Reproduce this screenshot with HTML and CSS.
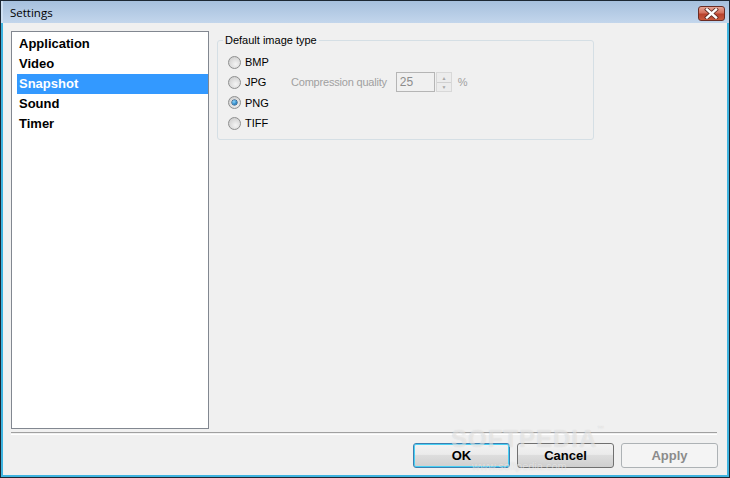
FILE: index.html
```html
<!DOCTYPE html>
<html lang="en">
<head>
    <meta charset="UTF-8">
    <title>Settings</title>
    <link rel="stylesheet" href="styles.css">
</head>
<body>

    <div class="window">
        <div class="titlebar">
            <span class="title">Settings</span>
            <span class="close-btn">
                <svg width="15" height="11" viewBox="0 0 15 11">
                    <path d="M3 1.5 L12 9.5 M12 1.5 L3 9.5" stroke="#5a2a22" stroke-width="4" stroke-linecap="square"/>
                    <path d="M3 1.5 L12 9.5 M12 1.5 L3 9.5" stroke="#ffffff" stroke-width="2.4" stroke-linecap="square"/>
                </svg>
            </span>
        </div>

        <div class="client">
            <div class="main">
                <ul class="nav-list">
                    <li>Application</li>
                    <li>Video</li>
                    <li class="selected">Snapshot</li>
                    <li>Sound</li>
                    <li>Timer</li>
                </ul>

                <fieldset class="group">
                    <legend>Default image type</legend>
                    <div class="radio-row"><span class="radio"></span>BMP</div>
                    <div class="radio-row">
                        <span class="radio"></span><span class="label-fixed">JPG</span>
                        <span class="disabled-text compress">Compression quality</span>
                        <span class="spin-input">25</span>
                        <span class="spin-buttons">
                            <span class="spin-up">&#9650;</span>
                            <span class="spin-down">&#9660;</span>
                        </span>
                        <span class="disabled-text percent">%</span>
                    </div>
                    <div class="radio-row"><span class="radio checked"></span>PNG</div>
                    <div class="radio-row"><span class="radio"></span>TIFF</div>
                </fieldset>
            </div>

            <div class="separator"></div>

            <div class="button-row">
                <button class="btn default">OK</button>
                <button class="btn">Cancel</button>
                <button class="btn" disabled>Apply</button>
            </div>

            <div class="watermark">SOFTPEDIA<sup>™</sup></div>
            <div class="watermark-url">www.softpedia.com</div>
        </div>
    </div>

</body>
</html>
```

FILE: styles.css
```css
body {
    margin: 0;
    padding: 0;
    background-color: #1f2b38;
    font-family: 'Liberation Sans', Arial, sans-serif;
}

.window {
    width: 730px;
    height: 478px;
    box-sizing: border-box;
    border: 1px solid #1c2733;
    display: flex;
    flex-direction: column;
    background: linear-gradient(#a6c0dd, #c3d6ec 22px);
}

.titlebar {
    height: 22px;
    display: flex;
    align-items: center;
    justify-content: space-between;
    padding: 0 4px 0 7px;
    border-left: 2px solid #cfe0f2;
}

.title {
    font-family: 'Open Sans', sans-serif;
    font-size: 11.5px;
    color: #000;
    margin-top: 1px;
}

.close-btn {
    width: 25px;
    height: 13px;
    border: 1px solid #6a2c24;
    border-radius: 3px;
    background: linear-gradient(#e7a595, #d4705c 45%, #b8412c 55%, #c85a3e);
    display: flex;
    align-items: center;
    justify-content: center;
    margin-top: 2px;
}

.client {
    position: relative;
    flex: 1;
    background-color: #f0f0f0;
    border: 2px solid #3fb4e0;
    border-top: none;
    padding: 8px 9px 0 8px;
    display: flex;
    flex-direction: column;
}

.main {
    display: flex;
    align-items: flex-start;
    gap: 8px;
    height: 398px;
}

.nav-list {
    list-style-type: none;
    margin: 0;
    padding: 2px 0 0 5px;
    width: 198px;
    height: 398px;
    box-sizing: border-box;
    background-color: #fff;
    border: 1px solid #828790;
}

.nav-list li {
    height: 20px;
    line-height: 20px;
    padding-left: 2px;
    font-size: 13px;
    font-weight: bold;
    color: #000;
}

.nav-list li.selected {
    background-color: #3399ff;
    color: #fff;
}

.group {
    margin: 3px 0 0 0;
    padding: 6px 0 6px 0;
    width: 377px;
    box-sizing: border-box;
    border: 1px solid #d5dfe5;
    border-radius: 3px;
    font-size: 11px;
    color: #000;
}

.group legend {
    margin-left: 5px;
    padding: 0 2px;
    font-size: 11px;
}

.radio-row {
    height: 20px;
    padding-left: 10px;
    display: flex;
    align-items: center;
}

.radio-row + .radio-row {
    margin-top: 0.4px;
}

.radio {
    width: 11px;
    height: 11px;
    border: 1px solid #8e8f8f;
    border-radius: 50%;
    background: radial-gradient(circle at 60% 65%, #f4f4f4, #d4d4d4 70%, #c6c6c6);
    margin-right: 4px;
    position: relative;
}

.radio.checked::after {
    content: "";
    position: absolute;
    left: 3px;
    top: 3px;
    width: 5px;
    height: 5px;
    border-radius: 50%;
    background: radial-gradient(circle at 40% 35%, #8ad6ff, #1b73b5 70%, #0d4f86);
    box-shadow: 0 0 0 0.5px #0b3b66;
}

.label-fixed {
    width: 46px;
}

.disabled-text {
    color: #a0a0a0;
}

.compress {
    letter-spacing: -0.2px;
}

.spin-input {
    margin-left: 9px;
    line-height: 18px;
    border: 1px solid #b5b5b5;
    padding-left: 3px;
    box-sizing: border-box;
    width: 39px;
    height: 20px;
    font-size: 12px;
    color: #8c8c8c;
    background-color: #f0f0f0;
}

.spin-buttons {
    display: flex;
    flex-direction: column;
    margin-left: 1px;
    width: 16px;
    height: 20px;
    border: 1px solid #d8d8d8;
    box-sizing: border-box;
}

.spin-up, .spin-down {
    flex: 1;
    font-size: 5px;
    color: #a8a8a8;
    display: flex;
    align-items: center;
    justify-content: center;
    background-color: #ececec;
}

.spin-up {
    border-bottom: 1px solid #d0d0d0;
}

.percent {
    margin-left: 6px;
}

.separator {
    margin-top: 3px;
    height: 1px;
    width: 706px;
    border-top: 1px solid #a0a0a0;
    border-bottom: 1px solid #ffffff;
}

.button-row {
    margin-top: 8px;
    display: flex;
    justify-content: flex-end;
    gap: 7px;
}

.btn {
    width: 97px;
    height: 25px;
    margin: 0;
    border: 1px solid #707070;
    border-radius: 3px;
    background: linear-gradient(#f2f2f2, #ebebeb 45%, #dddddd 50%, #cfcfcf);
    font-family: 'Liberation Sans', Arial, sans-serif;
    font-size: 13px;
    font-weight: bold;
    color: #000;
    padding: 0;
}

.btn.default {
    border-color: #3c7fb1;
    box-shadow: inset 0 0 0 1px #48d0f4;
}

.btn:disabled {
    border-color: #adb2b5;
    background: #f4f4f4;
    color: #8b8b8b;
}

.watermark {
    position: absolute;
    left: 448px;
    top: 402px;
    font-size: 24px;
    font-weight: bold;
    letter-spacing: 1px;
    color: rgba(255, 255, 255, 0.45);
    text-shadow: 0 0 1px rgba(150, 150, 150, 0.35);
    pointer-events: none;
}

.watermark sup {
    font-size: 7px;
    vertical-align: top;
}

.watermark-url {
    position: absolute;
    left: 469px;
    top: 437px;
    font-size: 11px;
    color: rgba(255, 255, 255, 0.5);
    text-shadow: 0 0 1px rgba(150, 150, 150, 0.35);
    pointer-events: none;
}
```
